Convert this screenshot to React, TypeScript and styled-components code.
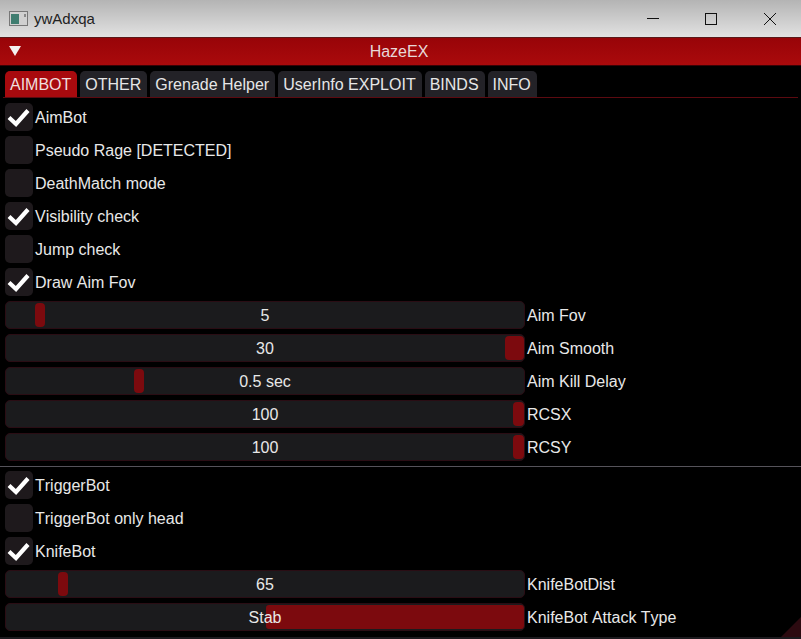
import React from "react";
import styled, { createGlobalStyle } from "styled-components";

const GlobalStyle = createGlobalStyle`
  html, body {
    margin: 0;
    padding: 0;
    background: #000;
    overflow: hidden;
  }
`;

const TABS = ["AIMBOT", "OTHER", "Grenade Helper", "UserInfo EXPLOIT", "BINDS", "INFO"];

const App: React.FC = () => {
  return (
    <Win>
      <GlobalStyle />
      <TitleBar>
        <AppIcon viewBox="0 0 20 16">
          <rect x="0.5" y="0.5" width="18" height="14" fill="#d0d0d0" stroke="#777" />
          <rect x="2" y="3" width="8" height="10" fill="#3f7d70" />
          <rect x="15" y="3" width="2" height="3" fill="#888" />
        </AppIcon>
        <AppTitle>ywAdxqa</AppTitle>
        <WinButtons>
          <WinButton>
            <svg width="14" height="14" viewBox="0 0 14 14">
              <path d="M1 6.5H13" stroke="#111" strokeWidth="1" />
            </svg>
          </WinButton>
          <WinButton>
            <svg width="14" height="14" viewBox="0 0 14 14">
              <rect x="1.5" y="1.5" width="11" height="11" fill="none" stroke="#111" />
            </svg>
          </WinButton>
          <WinButton>
            <svg width="14" height="14" viewBox="0 0 14 14">
              <path d="M1 1L13 13M13 1L1 13" stroke="#111" strokeWidth="1" />
            </svg>
          </WinButton>
        </WinButtons>
      </TitleBar>
      <Body>
        <Header>
          <Arrow viewBox="0 0 12 10">
            <path d="M0 0H12L6 10Z" fill="#f4f0f0" />
          </Arrow>
          <HeaderTitle>HazeEX</HeaderTitle>
        </Header>
        <TabBar>
          {TABS.map((t, i) => (
            <Tab key={t} $active={i === 0}>
              {t}
            </Tab>
          ))}
        </TabBar>
        <List>
          <CheckRow label="AimBot" checked />
          <CheckRow label="Pseudo Rage [DETECTED]" />
          <CheckRow label="DeathMatch mode" />
          <CheckRow label="Visibility check" checked />
          <CheckRow label="Jump check" />
          <CheckRow label="Draw Aim Fov" checked />
          <SliderRow label="Aim Fov" value="5" left={30} width={10} />
          <SliderRow label="Aim Smooth" value="30" left={500} width={19} />
          <SliderRow label="Aim Kill Delay" value="0.5 sec" left={129} width={10} />
          <SliderRow label="RCSX" value="100" left={508} width={11} />
          <SliderRow label="RCSY" value="100" left={508} width={11} />
          <Separator />
          <CheckRow label="TriggerBot" checked />
          <CheckRow label="TriggerBot only head" />
          <CheckRow label="KnifeBot" checked />
          <SliderRow label="KnifeBotDist" value="65" left={53} width={10} />
          <Row>
            <Slider>
              <ComboFill />
              <SliderValue>Stab</SliderValue>
            </Slider>
            <Label>KnifeBot Attack Type</Label>
          </Row>
        </List>
        <Grip />
      </Body>
    </Win>
  );
};

const CheckRow: React.FC<{ label: string; checked?: boolean }> = ({ label, checked }) => (
  <Row>
    <CheckBox>
      {checked && (
        <svg width="28" height="28" viewBox="0 0 28 28">
          <path d="M4 14.5L11 21L23 7.5" fill="none" stroke="#fff" strokeWidth="4.2" />
        </svg>
      )}
    </CheckBox>
    <Label>{label}</Label>
  </Row>
);

const SliderRow: React.FC<{ label: string; value: string; left: number; width: number }> = ({
  label,
  value,
  left,
  width,
}) => (
  <Row>
    <Slider>
      <Grab $left={left} $width={width} />
      <SliderValue>{value}</SliderValue>
    </Slider>
    <Label>{label}</Label>
  </Row>
);

export default App;

const Win = styled.div`
  width: 801px;
  height: 639px;
  display: flex;
  flex-direction: column;
  font-family: "Liberation Sans", Arial, sans-serif;
  font-kerning: none;
  overflow: hidden;
`;

const TitleBar = styled.div`
  height: 37px;
  flex: none;
  display: flex;
  align-items: center;
  padding-left: 9px;
  background: linear-gradient(#b4b4b4, #e2e2e2);
  border-bottom: 1px solid #5a1a1a;
`;

const AppIcon = styled.svg`
  width: 20px;
  height: 16px;
  margin-right: 5px;
`;

const AppTitle = styled.span`
  font-size: 15px;
  color: #222;
`;

const WinButtons = styled.div`
  margin-left: auto;
  margin-right: 2px;
  display: flex;
`;

const WinButton = styled.div`
  width: 58.5px;
  height: 36px;
  display: flex;
  align-items: center;
  justify-content: center;
`;

const Body = styled.div`
  position: relative;
  flex: 1;
  background: #000;
  border-bottom: 2px solid #1c1a1e;
`;

const Header = styled.div`
  height: 27px;
  display: grid;
  grid-template-columns: 1fr auto 1fr;
  align-items: center;
  padding: 0 12px 0 9px;
  background: linear-gradient(#980408, #aa0a0c);
  border-bottom: 1px solid #3a0206;
`;

const Arrow = styled.svg`
  width: 12px;
  height: 10px;
  margin-top: -2px;
`;

const HeaderTitle = styled.span`
  font-size: 16px;
  color: #e8d8d8;
`;

const TabBar = styled.div`
  display: flex;
  gap: 3px;
  margin: 5px 3px 0;
  padding-left: 2px;
  border-bottom: 1px solid #5c0a10;
`;

const Tab = styled.div<{ $active?: boolean }>`
  height: 26px;
  line-height: 27px;
  padding: 0 6px 0 5px;
  font-size: 16px;
  color: ${(p) => (p.$active ? "#f0dede" : "#e6e6e6")};
  background: ${(p) => (p.$active ? "#a80a0e" : "#232227")};
  border-radius: 5px 5px 0 0;
`;

const List = styled.div`
  display: flex;
  flex-direction: column;
  gap: 5px;
  padding: 5px 5px 0;
`;

const Row = styled.div`
  height: 28px;
  display: flex;
  align-items: center;
`;

const CheckBox = styled.div`
  width: 28px;
  height: 28px;
  flex: none;
  background: #1e191c;
  border-radius: 5px;
  margin-right: 2px;
  box-sizing: border-box;
`;

const Label = styled.span`
  font-size: 16px;
  padding-top: 2px;
  color: #e8e8e8;
  white-space: nowrap;
`;

const Slider = styled.div`
  position: relative;
  width: 520px;
  height: 28px;
  flex: none;
  margin-right: 2px;
  box-sizing: border-box;
  border: 1px solid #2a0d14;
  border-radius: 5px;
  background: #1b1b1d;
  overflow: hidden;
`;

const SliderValue = styled.div`
  position: relative;
  text-align: center;
  line-height: 27px;
  font-size: 16px;
  color: #e8e8e8;
`;

const Grab = styled.div<{ $left: number; $width: number }>`
  position: absolute;
  top: 1px;
  bottom: 1px;
  left: ${(p) => p.$left - 1}px;
  width: ${(p) => p.$width}px;
  border-radius: 4px;
  background: #7c0a0e;
`;

const ComboFill = styled.div`
  position: absolute;
  top: 1px;
  bottom: 1px;
  left: 260px;
  right: 0;
  border-radius: 3px;
  background: #7c0a0e;
`;

const Separator = styled.div`
  height: 1px;
  background: #55535a;
  margin: 0 -5px -1px;
`;

const Grip = styled.div`
  position: absolute;
  right: 0;
  bottom: 0;
  width: 20px;
  height: 20px;
  background: #2c0a10;
  clip-path: polygon(100% 0, 100% 100%, 0 100%);
`;
